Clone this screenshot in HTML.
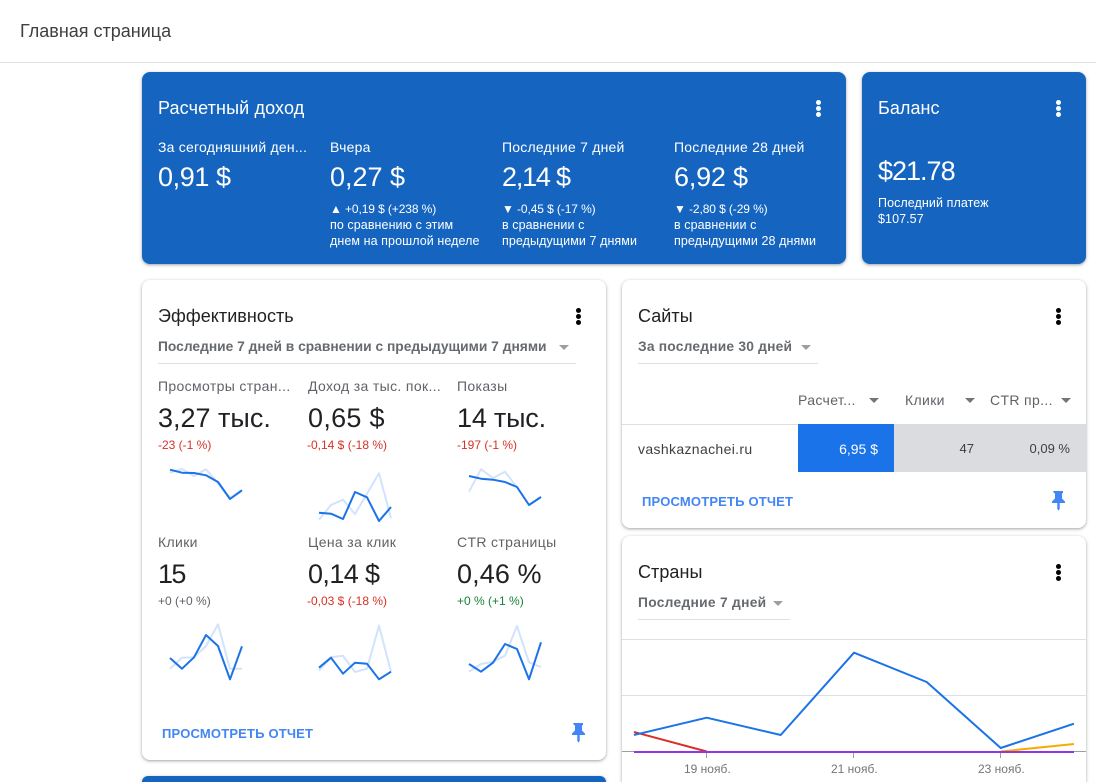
<!DOCTYPE html>
<html lang="ru"><head><meta charset="utf-8"><title>Главная страница</title>
<style>
html,body{margin:0;padding:0;background:#fff;width:1096px;height:782px;overflow:hidden}
#r{position:relative;width:1096px;height:782px;overflow:hidden;font-family:"Liberation Sans",sans-serif;color:#202124}
.c{position:absolute;border-radius:8px;background:#fff;box-shadow:0 1px 2px rgba(60,64,67,.3),0 1px 3px 1px rgba(60,64,67,.15)}
.b{background:#1565c0}
.t{position:absolute;white-space:nowrap;line-height:1}
.w{color:#fff}
.h{font-size:18px;letter-spacing:.05px}
.big{font-size:27px}
.lab{font-size:14px;color:#5f6368;letter-spacing:.35px}
.m{font-size:14px;color:#fff;letter-spacing:.22px}
.s{font-size:12.5px;color:#fff;letter-spacing:.08px}
.e{font-size:12px;color:#fff;letter-spacing:-.1px}
.d{font-size:12px}
.red{color:#d93025}
.g{color:#5f6368}
.lnk{font-size:13px;font-weight:bold;color:#4285f4;letter-spacing:.18px}
.sel{font-size:13.8px;color:#666a6e;font-weight:bold}
.l{position:absolute;background:#e0e0e0;height:1px}
.dot{position:absolute;width:5px;height:5px;border-radius:50%}
svg{position:absolute;left:0;top:0}
.tri{position:absolute;width:0;height:0;border-left:5px solid transparent;border-right:5px solid transparent;border-top:5px solid #9e9e9e}
.x{font-size:12px;color:#757575}
</style></head><body><div id="r">
<div class="t" style="left:20px;top:22px;font-size:18px;color:#3c4043">Главная страница</div>
<div class="l" style="left:0;top:62px;width:1096px"></div>

<div class="c b" style="left:142px;top:72px;width:704px;height:192px"></div>
<div class="c b" style="left:862px;top:72px;width:224px;height:192px"></div>
<div class="c" style="left:142px;top:280px;width:464px;height:480px"></div>
<div class="c" style="left:622px;top:280px;width:464px;height:248px"></div>
<div class="c" style="left:622px;top:536px;width:464px;height:246px;border-radius:8px 8px 0 0"></div>
<div class="c b" style="left:142px;top:776px;width:464px;height:6px;border-radius:8px 8px 0 0"></div>

<div class="t w h" style="left:158px;top:99px;letter-spacing:.13px">Расчетный доход</div>
<div class="t m" style="left:158px;top:140px">За сегодняшний ден...</div>
<div class="t m" style="left:330px;top:140px">Вчера</div>
<div class="t m" style="left:502px;top:140px">Последние 7 дней</div>
<div class="t m" style="left:674px;top:140px">Последние 28 дней</div>
<div class="t w big" style="left:158px;top:164px;letter-spacing:-.4px">0,91 $</div>
<div class="t w big" style="left:330px;top:164px">0,27 $</div>
<div class="t w big" style="left:502px;top:164px;letter-spacing:-1.2px">2,14 $</div>
<div class="t w big" style="left:674px;top:164px;letter-spacing:-.2px">6,92 $</div>
<div class="t e" style="left:330px;top:203px">▲ +0,19 $ (+238 %)</div>
<div class="t s" style="left:330px;top:219px">по сравнению с этим</div>
<div class="t s" style="left:330px;top:235px">днем на прошлой неделе</div>
<div class="t e" style="left:502px;top:203px">▼ -0,45 $ (-17 %)</div>
<div class="t s" style="left:502px;top:219px">в сравнении с</div>
<div class="t s" style="left:502px;top:235px">предыдущими 7 днями</div>
<div class="t e" style="left:674px;top:203px">▼ -2,80 $ (-29 %)</div>
<div class="t s" style="left:674px;top:219px">в сравнении с</div>
<div class="t s" style="left:674px;top:235px">предыдущими 28 днями</div>

<div class="t w h" style="left:878px;top:99px">Баланс</div>
<div class="t w big" style="left:878px;top:158px;letter-spacing:-1px">$21.78</div>
<div class="t s" style="left:878px;top:197px">Последний платеж</div>
<div class="t s" style="left:878px;top:213px">$107.57</div>

<div class="dot" style="left:816px;top:100px;background:#fff"></div><div class="dot" style="left:816px;top:106px;background:#fff"></div><div class="dot" style="left:816px;top:112px;background:#fff"></div>
<div class="dot" style="left:1056px;top:100px;background:#fff"></div><div class="dot" style="left:1056px;top:106px;background:#fff"></div><div class="dot" style="left:1056px;top:112px;background:#fff"></div>
<div class="dot" style="left:576px;top:308px;background:#000"></div><div class="dot" style="left:576px;top:314px;background:#000"></div><div class="dot" style="left:576px;top:320px;background:#000"></div>
<div class="dot" style="left:1056px;top:308px;background:#000"></div><div class="dot" style="left:1056px;top:314px;background:#000"></div><div class="dot" style="left:1056px;top:320px;background:#000"></div>
<div class="dot" style="left:1056px;top:564px;background:#000"></div><div class="dot" style="left:1056px;top:570px;background:#000"></div><div class="dot" style="left:1056px;top:576px;background:#000"></div>

<div class="t h" style="left:158px;top:307px">Эффективность</div>
<div class="t sel" style="left:158px;top:340px">Последние 7 дней в сравнении с предыдущими 7 днями</div>
<div class="tri" style="left:559px;top:345px"></div>
<div class="l" style="left:158px;top:363px;width:418px"></div>

<div class="t lab" style="left:158px;top:379px">Просмотры стран...</div>
<div class="t lab" style="left:308px;top:379px">Доход за тыс. пок...</div>
<div class="t lab" style="left:457px;top:379px">Показы</div>
<div class="t big" style="left:158px;top:405px">3,27 тыс.</div>
<div class="t big" style="left:308px;top:405px;letter-spacing:.3px">0,65 $</div>
<div class="t big" style="left:457px;top:405px;letter-spacing:-.2px">14 тыс.</div>
<div class="t d red" style="left:158px;top:439px">-23 (-1 %)</div>
<div class="t d red" style="left:307px;top:439px">-0,14 $ (-18 %)</div>
<div class="t d red" style="left:457px;top:439px">-197 (-1 %)</div>

<div class="t lab" style="left:158px;top:535px">Клики</div>
<div class="t lab" style="left:308px;top:535px">Цена за клик</div>
<div class="t lab" style="left:457px;top:535px">CTR страницы</div>
<div class="t big" style="left:158px;top:561px;letter-spacing:-1.6px">15</div>
<div class="t big" style="left:308px;top:561px;letter-spacing:-.6px">0,14 $</div>
<div class="t big" style="left:457px;top:561px;letter-spacing:.1px">0,46 %</div>
<div class="t d g" style="left:158px;top:595px">+0 (+0 %)</div>
<div class="t d red" style="left:307px;top:595px">-0,03 $ (-18 %)</div>
<div class="t d" style="left:457px;top:595px;color:#188038">+0 % (+1 %)</div>

<div class="t lnk" style="left:162px;top:727px">ПРОСМОТРЕТЬ ОТЧЕТ</div>

<div class="t h" style="left:638px;top:307px">Сайты</div>
<div class="t sel" style="left:638px;top:340px;letter-spacing:.2px">За последние 30 дней</div>
<div class="tri" style="left:801px;top:345px"></div>
<div class="l" style="left:638px;top:363px;width:180px"></div>
<div class="t lab" style="left:798px;top:393px">Расчет...</div>
<div class="t lab" style="left:905px;top:393px">Клики</div>
<div class="t lab" style="left:990px;top:393px">CTR пр...</div>
<div class="tri" style="left:869px;top:398px;border-top-color:#757575"></div>
<div class="tri" style="left:965px;top:398px;border-top-color:#757575"></div>
<div class="tri" style="left:1061px;top:398px;border-top-color:#757575"></div>
<div class="l" style="left:622px;top:424px;width:176px"></div>
<div style="position:absolute;left:798px;top:424px;width:96px;height:48px;background:#1a73e8"></div>
<div style="position:absolute;left:894px;top:424px;width:192px;height:48px;background:#dadce0"></div>
<div class="t lab" style="left:638px;top:442px;color:#3c4043">vashkaznachei.ru</div>
<div class="t" style="left:818px;top:442px;font-size:14px;color:#fff;width:60px;text-align:right">6,95 $</div>
<div class="t" style="left:934px;top:442px;font-size:13px;color:#3c4043;width:40px;text-align:right">47</div>
<div class="t" style="left:1010px;top:442px;font-size:13px;color:#3c4043;width:60px;text-align:right">0,09 %</div>
<div class="t lnk" style="left:642px;top:495px">ПРОСМОТРЕТЬ ОТЧЕТ</div>

<div class="t h" style="left:638px;top:563px">Страны</div>
<div class="t sel" style="left:638px;top:596px;letter-spacing:.28px">Последние 7 дней</div>
<div class="tri" style="left:773px;top:601px"></div>
<div class="l" style="left:638px;top:619px;width:152px"></div>

<div class="t x" style="left:684px;top:763px">19 нояб.</div>
<div class="t x" style="left:831px;top:763px">21 нояб.</div>
<div class="t x" style="left:978px;top:763px">23 нояб.</div>

<svg width="1096" height="782" viewBox="0 0 1096 782" fill="none" stroke-linejoin="round">
<g stroke="#d2e3fc" stroke-width="2">
<polyline points="170,472.7 182,469 194,476 206,469.3 218,483.3 230,498 242,490"/>
<polyline points="319,519.7 331,505 343,499.7 355,514 367,493.7 379,473.3 391,518.3"/>
<polyline points="469,491.7 481,469.3 493,478 505,471.7 517,487.3 529,505 541,497"/>
<polyline points="170,668.7 182,657.7 194,657.3 206,646 218,624.3 230,668.7 242,668.7"/>
<polyline points="319,670.7 331,657.3 343,655.7 355,672 367,668.7 379,625.7 391,671.7"/>
<polyline points="469,671.7 481,664 493,661.7 505,655.7 517,626 529,662.3 541,667"/>
</g>
<g stroke="#1a73e8" stroke-width="2">
<polyline points="170,469.7 182,472.7 194,473 206,475.3 218,482 230,499 242,490.3"/>
<polyline points="319,512.7 331,513.7 343,519 355,492 367,497.3 379,521 391,507"/>
<polyline points="469,476 481,478.7 493,479.7 505,482 517,487 529,505 541,497"/>
<polyline points="170,658 182,668.7 194,657.3 206,635 218,646 230,679.3 242,646.3"/>
<polyline points="319,667.7 331,657.7 343,673.7 355,662.7 367,663.7 379,679.3 391,671.7"/>
<polyline points="469,664 481,671.7 493,662.7 505,644 517,649 529,679.3 541,642.3"/>
</g>
<g stroke="#e0e0e0" stroke-width="1">
<line x1="622" y1="639.5" x2="1086" y2="639.5"/>
<line x1="622" y1="695.5" x2="1086" y2="695.5"/>
</g>
<line x1="622" y1="751.5" x2="1086" y2="751.5" stroke="#9e9e9e"/>
<g stroke="#9e9e9e"><line x1="706.5" y1="752" x2="706.5" y2="758"/><line x1="853.5" y1="752" x2="853.5" y2="758"/><line x1="1000.5" y1="752" x2="1000.5" y2="758"/></g>
<polyline points="634,732 706.7,751.5" stroke="#d93025" stroke-width="2"/>
<polyline points="1000.7,751.5 1074,744" stroke="#f9ab00" stroke-width="2"/>
<polyline points="634,735 706.7,717.7 780.7,735 854,652.7 926.7,682 1000.7,748 1074,723.7" stroke="#1a73e8" stroke-width="2"/>
<line x1="634" y1="752" x2="1074" y2="752" stroke="#9334e6" stroke-width="2"/>
<g fill="#4285f4" stroke="none">
<path d="M573 723h10v2l-1 .5v5l3 3v1.5h-5.3v6l-1.2 1.5-1.2-1.5v-6H572v-1.5l3-3v-5l-1-.5z"/>
<path transform="translate(480,-232)" d="M573 723h10v2l-1 .5v5l3 3v1.5h-5.3v6l-1.2 1.5-1.2-1.5v-6H572v-1.5l3-3v-5l-1-.5z"/>
</g>
</svg>
</div></body></html>
